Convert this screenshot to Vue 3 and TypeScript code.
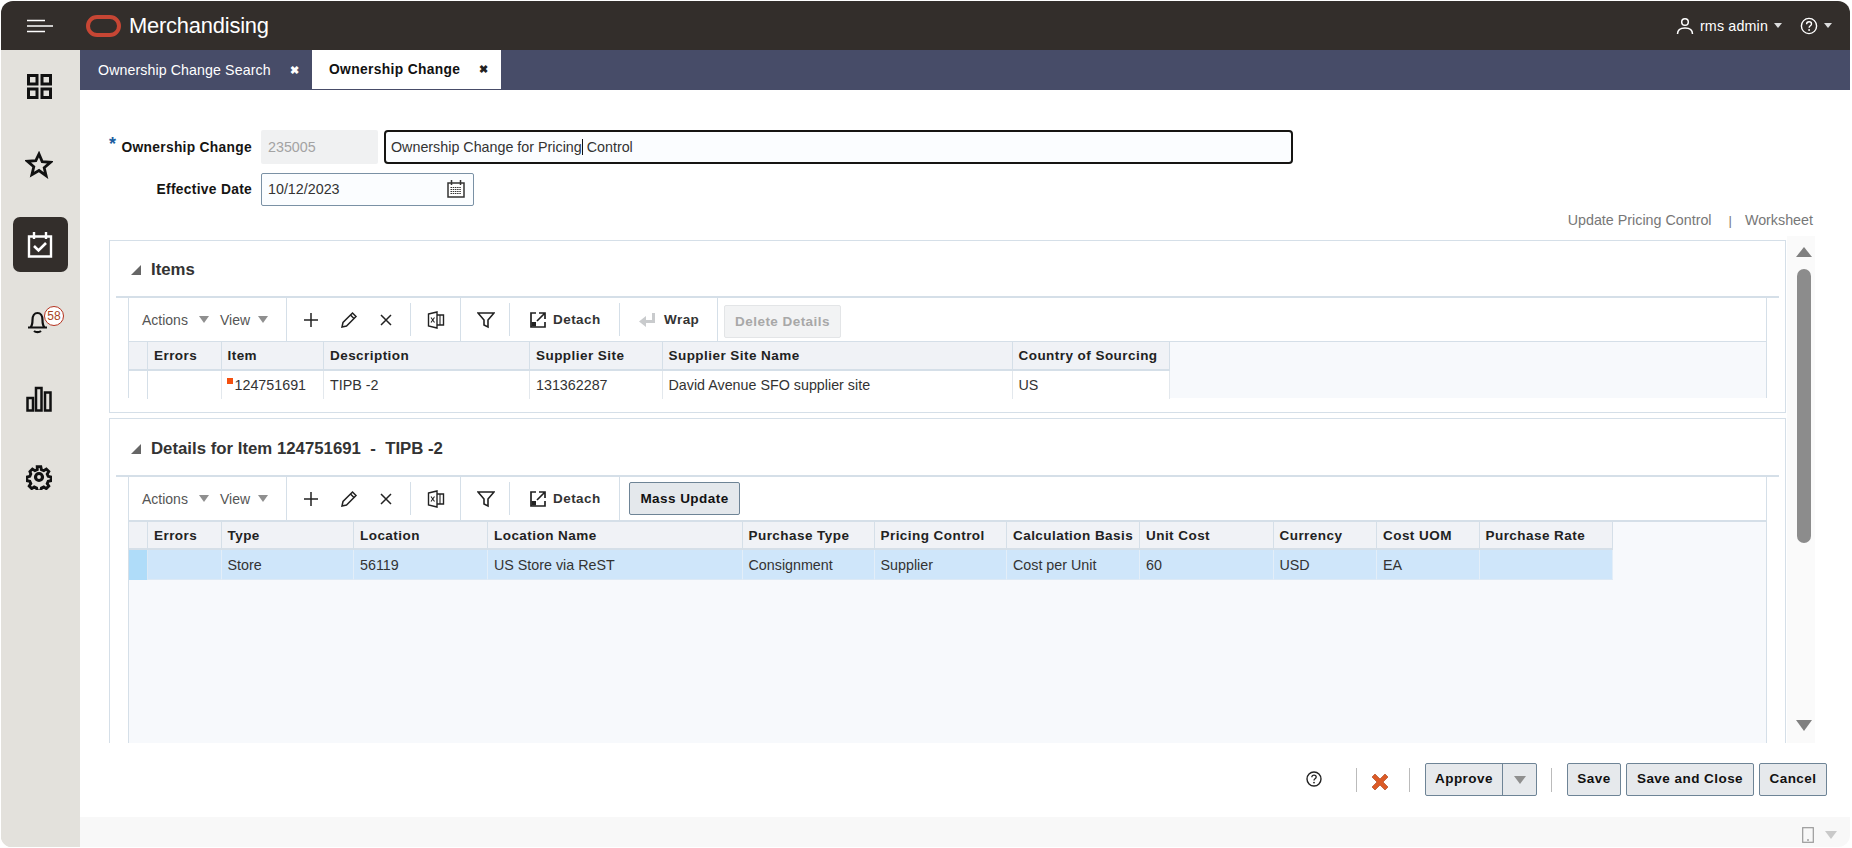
<script setup lang="ts">
interface Col { label: string; width: number; value: string; mark?: boolean }

const navItems = ['grid', 'star', 'task', 'bell', 'chart', 'gear']

const itemCols: Col[] = [
  { label: 'Errors', width: 73.5, value: '' },
  { label: 'Item', width: 102.5, value: '124751691', mark: true },
  { label: 'Description', width: 206, value: 'TIPB -2' },
  { label: 'Supplier Site', width: 132.5, value: '131362287' },
  { label: 'Supplier Site Name', width: 350, value: 'David Avenue SFO supplier site' },
  { label: 'Country of Sourcing', width: 157, value: 'US' },
]

const detailCols: Col[] = [
  { label: 'Errors', width: 73.5, value: '' },
  { label: 'Type', width: 132.5, value: 'Store' },
  { label: 'Location', width: 134, value: '56119' },
  { label: 'Location Name', width: 254.5, value: 'US Store via ReST' },
  { label: 'Purchase Type', width: 132, value: 'Consignment' },
  { label: 'Pricing Control', width: 132.5, value: 'Supplier' },
  { label: 'Calculation Basis', width: 133, value: 'Cost per Unit' },
  { label: 'Unit Cost', width: 133.5, value: '60' },
  { label: 'Currency', width: 103.5, value: 'USD' },
  { label: 'Cost UOM', width: 102.5, value: 'EA' },
  { label: 'Purchase Rate', width: 133.5, value: '' },
]
</script>

<template>
  <div class="app">
    <header class="topbar">
      <svg class="burger" width="26" height="14" viewBox="0 0 26 14"><path d="M0 1.5h18M0 7h26M0 12.5h18" stroke="#fff" stroke-width="1.6" fill="none" /></svg>
      <svg class="logo" width="35" height="22" viewBox="0 0 35 22"><rect x="2" y="2" width="31" height="18" rx="9" fill="none" stroke="#c74634" stroke-width="4" /></svg>
      <span class="brand">Merchandising</span>
      <span class="spacer"></span>
      <svg class="user" width="18" height="18" viewBox="0 0 18 18"><circle cx="9" cy="5" r="3.3" fill="none" stroke="#fff" stroke-width="1.5" /><path d="M1.5 17c0-4 3-6 7.5-6s7.5 2 7.5 6" fill="none" stroke="#fff" stroke-width="1.5" /></svg>
      <span class="username">rms admin</span>
      <span class="caret"></span>
      <svg class="hlp" width="18" height="18" viewBox="0 0 18 18"><circle cx="9" cy="9" r="7.6" fill="none" stroke="#fff" stroke-width="1.4" /><path d="M6.6 7.2c0-1.5 1-2.4 2.5-2.4s2.4.9 2.4 2.1c0 1.9-2.4 1.9-2.4 3.8" fill="none" stroke="#fff" stroke-width="1.4" /><circle cx="9.1" cy="13" r=".9" fill="#fff" /></svg>
      <span class="caret last"></span>
    </header>

    <div class="body">
      <nav class="sidebar">
        <div v-for="n in navItems" :key="n" class="nav" :class="{ active: n === 'task' }">
          <svg v-if="n === 'grid'" width="25" height="25" viewBox="0 0 25 25" fill="none" stroke="#111" stroke-width="3"><rect x="1.5" y="1.5" width="8.5" height="8.5" /><rect x="15" y="1.5" width="8.5" height="8.5" /><rect x="1.5" y="15" width="8.5" height="8.5" /><rect x="15" y="15" width="8.5" height="8.5" /></svg>
          <svg v-else-if="n === 'star'" width="28" height="28" viewBox="0 0 28 28"><path d="M14 3l3.2 7.6 8.2.7-6.2 5.4 1.9 8L14 19.5l-7.1 4.2 1.9-8-6.2-5.4 8.2-.7z" fill="none" stroke="#111" stroke-width="2.8" stroke-linejoin="miter" /></svg>
          <svg v-else-if="n === 'task'" width="26" height="26" viewBox="0 0 26 26" fill="none" stroke="#fff" stroke-width="2.4"><path d="M2 4.5h22v20H2z" /><path d="M7 0v7M19 0v7" /><path d="M7 14l4.5 4.5L19 11" stroke-width="2.6" /></svg>
          <span v-else-if="n === 'bell'" class="bellwrap">
            <svg width="26" height="26" viewBox="0 0 26 26" fill="none" stroke="#111" stroke-width="2.2"><path d="M2 19.5h19M4.500 19.500c1.800-2 2-4 2-7.500 0-4 2-7 5-7s5 3 5 7c0 3.500.2 5.500 2 7.500" /><path d="M8 23c1.800 1.600 5.200 1.600 7 0" /></svg>
            <span class="badge">58</span>
          </span>
          <svg v-else-if="n === 'chart'" width="26" height="26" viewBox="0 0 26 26" fill="none" stroke="#111" stroke-width="2.500"><rect x="1.500" y="12" width="5.500" height="12.500" /><rect x="10" y="2" width="5.500" height="22.500" /><rect x="19" y="6.500" width="5.500" height="18" /></svg>
          <svg v-else width="26" height="26" viewBox="0 0 26 26" fill="none" stroke="#111" stroke-width="3.200"><circle cx="13" cy="13" r="3.500" /><path d="M11 1.500h4l.7 3.300 2.600 1.100 2.800-1.800 2.800 2.800-1.800 2.800 1.100 2.600 3.300.7v4l-3.300.7-1.100 2.600 1.800 2.800-2.800 2.800-2.800-1.800-2.600 1.100-.7 3.300h-4l-.7-3.300-2.600-1.100-2.800 1.800-2.800-2.800 1.800-2.800-1.100-2.600-3.300-.7v-4l3.300-.7 1.100-2.600L2.900 6.900l2.800-2.800 2.800 1.800 2.600-1.100z" transform="translate(1.300 1.300) scale(.9)" /></svg>
        </div>
      </nav>

      <main class="main">
        <div class="tabs">
          <div class="tab"><span>Ownership Change Search</span><b class="tabx">✖</b></div>
          <div class="tab on"><span>Ownership Change</span><b class="tabx">✖</b></div>
        </div>

        <div class="content">
          <div class="frow">
            <label class="flabel"><i class="req">*</i>Ownership Change</label>
            <div class="idbox">235005</div>
            <div class="namebox">Ownership Change for Pricing<i class="cursor"></i> Control</div>
          </div>
          <div class="frow second">
            <label class="flabel">Effective Date</label>
            <div class="datebox">
              <span>10/12/2023</span>
              <svg width="18" height="18" viewBox="0 0 18 18"><path d="M1 3h16v14H1z" fill="#fff" stroke="#333" stroke-width="1.500" /><path d="M4.500 0v5M13.500 0v5" stroke="#333" stroke-width="1.500" /><path d="M3.500 7.500h11M3.500 9.500h11M3.500 11.500h11M3.500 13.500h11" stroke="#333" stroke-width="1.200" stroke-dasharray="1.500 .7" /></svg>
            </div>
          </div>
          <div class="links"><span>Update Pricing Control</span><span class="pipe">|</span><span>Worksheet</span></div>

          <div class="split">
            <div class="panels">
              <section class="panel first">
                <h2 class="phead"><i class="disc"></i>Items</h2>
                <div class="rule"></div>
                <div class="tbl">
                  <div class="bar">
                    <div class="menus"><span class="mn">Actions</span><i class="tri"></i><span class="mn vw">View</span><i class="tri"></i></div>
                    <div class="tools">
                      <svg width="16" height="16" viewBox="0 0 16 16"><path d="M8 1v14M1 8h14" stroke="#222" stroke-width="1.500" /></svg>
                      <svg width="18" height="18" viewBox="0 0 18 18" fill="none" stroke="#222" stroke-width="1.500"><path d="M2 16l1-4.500L12.500 2l3.500 3.500L6.500 15z" /><path d="M10.500 4l3.500 3.500" /></svg>
                      <svg width="14" height="14" viewBox="0 0 14 14"><path d="M2 2l10 10M12 2L2 12" stroke="#222" stroke-width="1.500" /></svg>
                    </div>
                    <div class="one">
                      <svg width="18" height="18" viewBox="0 0 18 18" fill="none" stroke="#222" stroke-width="1.400"><path d="M1.500 3L10 1v16l-8.500-2z" /><path d="M10 4h6.500v10H10" /><path d="M4 6.500l3.500 5M7.500 6.500L4 11.500" stroke-width="1.100" /><path d="M13 4v10" stroke-width="1.100" /></svg>
                    </div>
                    <div class="one filt">
                      <svg width="18" height="18" viewBox="0 0 18 18" fill="none" stroke="#222" stroke-width="1.600"><path d="M1 2h16l-6 7v7l-4-2V9z" /></svg>
                    </div>
                    <div class="btnish">
                      <svg width="18" height="18" viewBox="0 0 18 18" fill="none" stroke="#222" stroke-width="1.700"><path d="M7 2H2v14h14v-5" /><path d="M10 2h6v6M16 2l-8 8" /><rect x="2.500" y="11" width="4.500" height="4.500" fill="#222" stroke="none" /></svg>
                      <span>Detach</span>
                    </div>
                    <div class="wrap">
                      <svg width="17" height="16" viewBox="0 0 17 16"><path d="M13 1h3v10H7v4l-7-5.500L7 4v4h6z" fill="#c9cbcd" /></svg>
                      <span>Wrap</span>
                    </div>
                    <div class="del"><button class="off" type="button">Delete Details</button></div>
                  </div>
                  <div class="thead">
                    <div class="corner"></div>
                    <div v-for="c in itemCols" :key="c.label" class="th" :style="{ width: c.width + 'px' }">{{ c.label }}</div>
                  </div>
                  <div class="trow">
                    <div class="corner rh"></div>
                    <div v-for="c in itemCols" :key="c.label" class="td" :class="{ mk: c.mark }" :style="{ width: c.width + 'px' }">{{ c.value }}</div>
                  </div>
                </div>
              </section>

              <section class="panel">
                <h2 class="phead det"><i class="disc"></i>Details for Item 124751691&nbsp; - &nbsp;TIPB -2</h2>
                <div class="rule"></div>
                <div class="tbl tall">
                  <div class="bar bar2">
                    <div class="menus"><span class="mn">Actions</span><i class="tri"></i><span class="mn vw">View</span><i class="tri"></i></div>
                    <div class="tools">
                      <svg width="16" height="16" viewBox="0 0 16 16"><path d="M8 1v14M1 8h14" stroke="#222" stroke-width="1.500" /></svg>
                      <svg width="18" height="18" viewBox="0 0 18 18" fill="none" stroke="#222" stroke-width="1.500"><path d="M2 16l1-4.500L12.500 2l3.500 3.500L6.500 15z" /><path d="M10.500 4l3.500 3.500" /></svg>
                      <svg width="14" height="14" viewBox="0 0 14 14"><path d="M2 2l10 10M12 2L2 12" stroke="#222" stroke-width="1.500" /></svg>
                    </div>
                    <div class="one">
                      <svg width="18" height="18" viewBox="0 0 18 18" fill="none" stroke="#222" stroke-width="1.400"><path d="M1.500 3L10 1v16l-8.500-2z" /><path d="M10 4h6.500v10H10" /><path d="M4 6.500l3.500 5M7.500 6.500L4 11.500" stroke-width="1.100" /><path d="M13 4v10" stroke-width="1.100" /></svg>
                    </div>
                    <div class="one filt">
                      <svg width="18" height="18" viewBox="0 0 18 18" fill="none" stroke="#222" stroke-width="1.600"><path d="M1 2h16l-6 7v7l-4-2V9z" /></svg>
                    </div>
                    <div class="btnish last">
                      <svg width="18" height="18" viewBox="0 0 18 18" fill="none" stroke="#222" stroke-width="1.700"><path d="M7 2H2v14h14v-5" /><path d="M10 2h6v6M16 2l-8 8" /><rect x="2.500" y="11" width="4.500" height="4.500" fill="#222" stroke="none" /></svg>
                      <span>Detach</span>
                    </div>
                    <button class="mass" type="button">Mass Update</button>
                  </div>
                  <div class="thead">
                    <div class="corner"></div>
                    <div v-for="c in detailCols" :key="c.label" class="th" :style="{ width: c.width + 'px' }">{{ c.label }}</div>
                  </div>
                  <div class="trow sel">
                    <div class="corner rh"></div>
                    <div v-for="c in detailCols" :key="c.label" class="td" :style="{ width: c.width + 'px' }">{{ c.value }}</div>
                  </div>
                </div>
              </section>
            </div>
            <div class="scroll">
              <i class="up"></i>
              <i class="thumb"></i>
              <i class="down"></i>
            </div>
          </div>
        </div>

        <footer class="foot">
          <svg class="fh" width="16" height="16" viewBox="0 0 16 16"><circle cx="8" cy="8" r="7" fill="none" stroke="#222" stroke-width="1.400" /><path d="M5.800 6.300c0-1.300.9-2.100 2.200-2.100s2.200.8 2.200 1.900c0 1.700-2.200 1.700-2.200 3.300" fill="none" stroke="#222" stroke-width="1.300" /><circle cx="8" cy="11.600" r=".9" fill="#222" /></svg>
          <i class="sep s1"></i>
          <svg class="fx" width="18" height="18" viewBox="0 0 18 18"><path d="M4 1l5 5 5-5 3 3-5 5 5 5-3 3-5-5-5 5-3-3 5-5-5-5z" fill="#dc5a26" stroke="#a53c14" stroke-width=".6" /></svg>
          <i class="sep s2"></i>
          <div class="approve"><span class="ap">Approve</span><span class="apm"><i class="tri big"></i></span></div>
          <i class="sep s3"></i>
          <button class="fbtn save" type="button">Save</button>
          <button class="fbtn sc" type="button">Save and Close</button>
          <button class="fbtn cancel" type="button">Cancel</button>
        </footer>
        <div class="strip">
          <svg width="12" height="16" viewBox="0 0 12 16"><rect x=".7" y=".7" width="10.600" height="14.600" fill="none" stroke="#999" stroke-width="1.200" /><path d="M5 13h2" stroke="#777" stroke-width="1.200" /></svg>
          <i class="tri pale"></i>
        </div>
      </main>
    </div>
  </div>
</template>

<style>
html, body { margin: 0; background: #fff; }
</style>

<style scoped>
.app {
  width: 1852px; height: 848px; box-sizing: border-box; overflow: hidden;
  display: flex; flex-direction: column; padding: 1px 2px 1px 1px;
  font-family: "Liberation Sans", Arial, sans-serif; color: #222; font-size: 14.300px;
  background: #fff; border-radius: 14px;
}
.topbar {
  height: 49px; flex: none; background: #332e2b; color: #fff; display: flex; align-items: center;
  border-radius: 12px 12px 0 0; padding-left: 26px;
}
.logo { margin-left: 33px; }
.brand { font-size: 21.900px; margin-left: 8px; letter-spacing: -.2px; }
.spacer { flex: 1; }
.username { font-size: 14.300px; margin-left: 6px; letter-spacing: .15px; }
.caret { width: 0; height: 0; border: 4.500px solid transparent; border-top: 5px solid #ddd; border-bottom: 0; margin-left: 6px; }
.hlp { margin-left: 18px; }
.caret.last { margin-left: 6px; margin-right: 18px; }

.body { flex: 1; display: flex; min-height: 0; }
.sidebar { width: 79px; flex: none; background: #e3e1dc; padding-top: 9px; box-sizing: border-box; display: flex; flex-direction: column; align-items: center; border-radius: 0 0 0 8px; }
.nav { width: 55px; height: 55px; margin-bottom: 23px; padding-right: 3px; box-sizing: border-box; flex: none; display: flex; align-items: center; justify-content: center; }
.nav:nth-child(2) { margin-bottom: 25px; }
.nav:nth-child(3) { margin-bottom: 21px; }
.nav.active { background: #332e2b; border-radius: 7px; padding-right: 1px; }
.bellwrap { position: relative; display: block; width: 26px; height: 26px; }
.badge {
  position: absolute; left: 18px; top: -2px; width: 20px; height: 20px; box-sizing: border-box; border-radius: 50%; background: #fff;
  border: 1px solid #b5321f; color: #a8441e; font-size: 12px; line-height: 18px; text-align: center;
}

.main { flex: 1; min-width: 0; display: flex; flex-direction: column; }
.tabs { height: 40px; flex: none; background: #474c68; display: flex; }
.tab { width: 232px; box-sizing: border-box; display: flex; align-items: center; color: #fff; padding-left: 18px; font-size: 14.200px; letter-spacing: .1px; }
.tab span { width: 192px; }
.tabx { font-size: 11px; font-weight: 700; }
.tab.on { background: #fff; color: #111; width: 189px; height: 39px; padding-left: 17px; font-weight: 700; font-size: 13.800px; letter-spacing: .35px; }
.tab.on span { width: 150px; }
.tab.on .tabx { color: #222; }
.content { flex: 1; min-height: 0; overflow: hidden; padding-top: 40px; }
.frow { display: flex; align-items: center; height: 34px; }
.frow.second { margin-top: 9px; height: 33px; }
.flabel { width: 181px; padding-right: 9px; box-sizing: border-box; text-align: right; font-weight: 700; font-size: 13.800px; letter-spacing: .3px; color: #161513; position: relative; }
.frow.second .flabel { padding-bottom: 1px; }
.req { position: absolute; left: 29px; top: -6px; color: #1d5e9f; font-style: normal; font-size: 18px; }
.idbox { width: 117px; height: 34px; background: #f0f1f2; color: #a3a3a3; border-radius: 2px; line-height: 34px; padding-left: 7px; box-sizing: border-box; }
.namebox { margin-left: 6px; width: 909px; height: 34px; box-sizing: border-box; border: 2px solid #161513; border-radius: 4px; padding-left: 5px; line-height: 30px; color: #333; background: #fbfdff; position: relative; white-space: nowrap; }
.cursor { display: inline-block; width: 1px; height: 16px; background: #111; vertical-align: -3px; }
.datebox { width: 213px; height: 33px; box-sizing: border-box; border: 1px solid #7a91a5; border-radius: 2px; display: flex; align-items: center; justify-content: space-between; padding: 0 8px 1px 6px; background: #fbfdff; color: #333; }
.links { display: flex; justify-content: flex-end; height: 28px; margin-bottom: 2px; align-items: center; padding-right: 37px; color: #777; font-size: 14.300px; }
.pipe { margin: 0 13px 0 17px; font-size: 13px; }
.split { display: flex; padding-left: 29px; align-items: flex-start; height: 507px; overflow: hidden; }
.panels { width: 1677px; flex: none; padding-top: 4px; box-sizing: border-box; height: 507px; }
.panel { border: 1px solid #d5dfe8; box-sizing: border-box; height: 600px; margin-top: 5px; }
.panel.first { height: 173px; margin-top: 0; }
.phead { height: 55px; margin: 0; box-sizing: border-box; display: flex; align-items: center; padding: 3px 0 0 21px; font-size: 16.800px; font-weight: 700; color: #333; }
.phead.det { height: 56px; padding-top: 3px; white-space: pre; }
.disc { width: 0; height: 0; border-style: solid; border-width: 0 0 10px 10px; border-color: transparent transparent #666 transparent; margin-right: 10px; }
.rule { height: 2px; background: #d5dfe8; margin: 0 6px; }
.tbl { margin: 0 18px; border-left: 1px solid #d5dfe8; border-right: 1px solid #d5dfe8; background: #f7f9fc; height: 100px; }
.tbl.tall { height: 500px; }
.bar { height: 43px; background: #fff; display: flex; border-bottom: 1px solid #d5dfe8; box-sizing: content-box; align-items: stretch; }
.bar2 { height: 43px; border-bottom-width: 2px; }
.menus { width: 158px; box-sizing: border-box; border-right: 1px solid #d5dfe8; display: flex; align-items: center; padding-left: 13px; color: #555; font-size: 14px; }
.mn { width: 57px; }
.mn.vw { width: 30px; margin-left: 11px; margin-right: 8px; }
.tri { display: inline-block; width: 0; height: 0; border-style: solid; border-width: 7px 5.500px 0; border-color: #8f8f8f transparent transparent; }
.tri.big { border-width: 8px 6px 0; }
.tri.pale { border-width: 8px 6px 0; border-color: #c9c9c9 transparent transparent; }
.tools { width: 124px; display: flex; align-items: center; justify-content: space-around; padding: 0 7px 0 5px; box-sizing: border-box; position: relative; }
.tools::after, .one.filt::after, .btnish::after { content: ""; position: absolute; right: 0; top: 5px; bottom: 5px; width: 1px; background: #d5dfe8; }
.one { width: 50px; box-sizing: border-box; display: flex; align-items: center; justify-content: center; border-right: 1px solid #d5dfe8; position: relative; }
.one.filt { width: 49px; border-right: 0; }
.btnish { width: 110px; display: flex; align-items: center; padding-left: 19px; box-sizing: border-box; gap: 6px; font-weight: 700; font-size: 13.500px; letter-spacing: .45px; color: #333; position: relative; }
.btnish.last::after { display: none; }
.btnish.last { border-right: 1px solid #d5dfe8; }
.wrap { width: 98px; display: flex; align-items: center; padding-left: 19px; box-sizing: border-box; gap: 8px; font-weight: 700; font-size: 13.500px; letter-spacing: .45px; color: #333; border-right: 1px solid #d5dfe8; }
.del { padding: 7px 0 0 6px; }
.off, .mass, .fbtn {
  font-family: inherit; font-weight: 700; font-size: 13.500px; letter-spacing: .45px; cursor: default; box-sizing: border-box; border-radius: 2px;
}
.off { width: 117px; height: 33px; background: #f2f3f4; border: 1px solid #e3e5e7; color: #a8a8a8; padding: 0; }
.mass { width: 111px; height: 33px; margin: 5px 0 0 9px; padding: 0; background: #e4e8ec; border: 1px solid #6e8496; color: #111; }
.thead { display: flex; height: 29px; background: #f7f9fc; }
.bar2 + .thead { height: 28px; }
.th { height: 100%; box-sizing: border-box; background: #f0f2f6; border-right: 1px solid #d5dfe8; border-bottom: 2px solid #d5dfe8; padding-left: 6px; display: flex; align-items: center; font-weight: 700; font-size: 13.500px; letter-spacing: .45px; color: #222; white-space: nowrap; }
.corner { width: 19px; flex: none; box-sizing: border-box; background: #f0f2f6; border-right: 1px solid #d5dfe8; border-bottom: 2px solid #d5dfe8; }
.corner.rh { background: #fff; border-bottom: 0; }
.trow { display: flex; height: 28px; }
.td { height: 100%; box-sizing: border-box; background: #fff; border-right: 1px solid #e3e8ed; padding-left: 6px; display: flex; align-items: center; color: #333; white-space: nowrap; font-size: 14.300px; position: relative; }
.td.mk { padding-left: 13px; }
.td.mk::before { content: ""; position: absolute; left: 5px; top: 7px; width: 6px; height: 6px; background: #f4500f; }
.trow.sel { height: 30px; }
.sel .td { background: #cfe6fa; border-right-color: #e3eef8; border-bottom: 1px solid #dce9f5; }
.sel .corner.rh { background: #afdcf9; border-color: #dce9f5; border-bottom: 0; }
.scroll { width: 28px; margin-left: 1px; height: 507px; background: #fafafa; position: relative; flex: none; }
.scroll i { position: absolute; display: block; }
.up { left: 9px; top: 11px; width: 0; height: 0; border-style: solid; border-width: 0 8px 10px; border-color: transparent transparent #808080; }
.thumb { left: 10px; top: 33px; width: 14px; height: 274px; background: #8c8c8c; border-radius: 7px; }
.down { left: 9px; top: 484px; width: 0; height: 0; border-style: solid; border-width: 11px 8px 0; border-color: #808080 transparent transparent; }

.foot { height: 74px; flex: none; background: #fff; display: flex; align-items: center; position: relative; padding: 0 0 1px 1226px; box-sizing: border-box; }
.fh { position: relative; top: -1px; }
.sep { width: 1px; height: 24px; background: #bbb; flex: none; }
.s1 { margin-left: 34px; }
.fx { margin: 5px 0 0 14px; }
.s2 { margin-left: 20px; }
.approve { margin-left: 15px; width: 112px; height: 33px; box-sizing: border-box; border: 1px solid #6e8496; border-radius: 2px; background: #e6e9ec; display: flex; }
.ap { width: 77px; border-right: 1px solid #6e8496; box-sizing: border-box; font-weight: 700; font-size: 13.500px; letter-spacing: .45px; color: #111; line-height: 29px; text-align: center; }
.apm { flex: 1; display: flex; align-items: center; justify-content: center; }
.s3 { margin-left: 14px; }
.fbtn { height: 33px; background: #e6e9ec; border: 1px solid #6e8496; color: #111; padding: 0 0 2px; }
.save { width: 54px; margin-left: 15px; }
.sc { width: 128px; margin-left: 5px; }
.cancel { width: 68px; margin-left: 5px; }
.strip { height: 30px; flex: none; background: #f8f8f8; display: flex; align-items: center; justify-content: flex-end; gap: 11px; padding-right: 13px; padding-top: 6px; box-sizing: border-box; border-radius: 0 0 12px 0; }
</style>
